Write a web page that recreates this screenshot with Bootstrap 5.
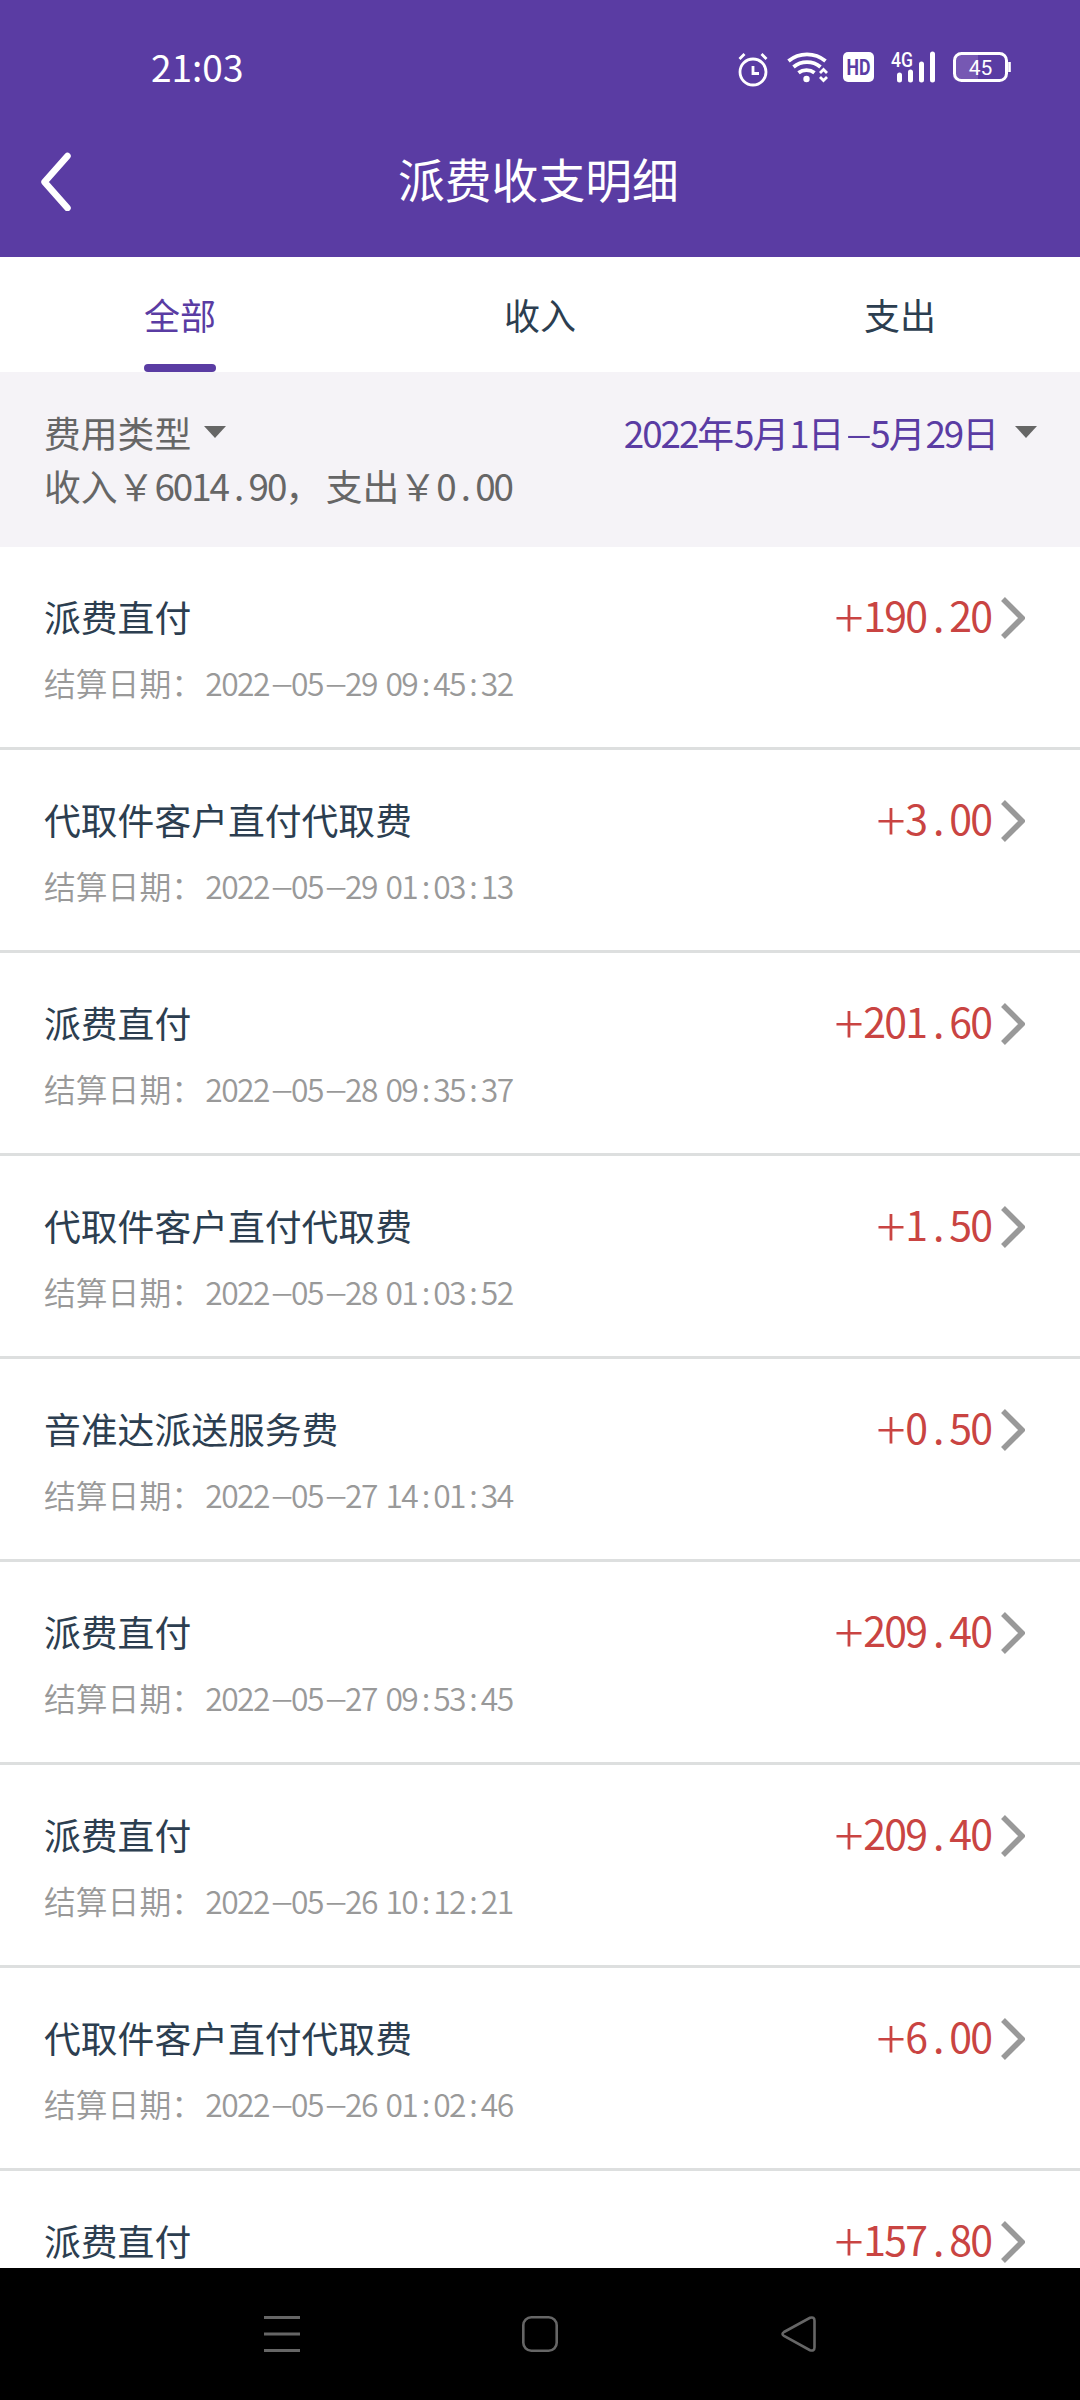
<!DOCTYPE html>
<html lang="zh-CN">
<head>
<meta charset="utf-8">
<meta name="viewport" content="width=device-width, initial-scale=1">
<title>派费收支明细</title>
<link href="https://cdn.jsdelivr.net/npm/bootstrap@5.3.0/dist/css/bootstrap.min.css" rel="stylesheet">
<style>
:root { --brand: #5a3ca3; --ink: #2c3e50; }
body { width: 1080px; height: 2400px; overflow: hidden; font-family: "Noto Sans CJK SC", sans-serif; font-weight: 400; font-kerning: none; color: var(--ink); line-height: 1; background: #fff; }
svg { display: block; flex: none; }
.app-head { background: var(--brand); height: 257px; }
.status-row { height: 136px; padding: 0 68px 0 151px; }
.status-row svg { margin-top: 2px; }
.clock { font-size: 37px; line-height: 50px; padding-bottom: 5px; }
.title-row { height: 90px; padding-left: 40px; }
.page-title { font-size: 46.8px; line-height: 60px; font-weight: 400; width: 281px; margin-left: 326px; padding-bottom: 6px; }
.tab-row { height: 115px; }
.tab-row .nav-link { height: 115px; width: 72px; padding: 32px 0 0; font-size: 36px; line-height: 50px; color: var(--ink); }
.tab-row .nav-link.active { color: var(--brand); }
.tab-row .nav-link.active::after { content: ""; display: block; height: 8px; margin-top: 25px; border-radius: 4px; background: var(--brand); }
.filter-bar { height: 175px; background: #f5f3f7; color: #666; font-size: 36.8px; padding: 34px 43px 0 44px; }
.filter-bar .line-box { height: 53px; line-height: 53px; }
.range-text { color: var(--brand); }
.range-text b { position: static; }
.caret { width: 22px; height: 12px; margin: 0 0 2px 16px; }
.type-pick .caret { margin-left: 13px; }
.bill-item { height: 203px; border-bottom: 3px solid #dddfdf; padding: 41px 55px 0 44px; }
.bill-item:last-child { height: 97px; border-bottom: 0; }
.bill-name { font-size: 36.8px; line-height: 56px; }
.bill-date { font-size: 31.8px; line-height: 44px; margin-top: 16px; color: #999; font-weight: 350; }
.bill-sum { font-size: 41px; line-height: 53px; color: #c94442; height: 56px; }
.bill-sum .fig { margin-right: 1px; }
.chev { margin-top: 2px; margin-left: -1px; }
.fig b { font-weight: inherit; display: inline-block; text-align: center; width: .5em; letter-spacing: -.052em; }
.bill-sum .fig b { width: .512em; }
.fig .g-dot, .bill-sum .fig .g-dot { width: .56em; }
.fig .g-dash { width: .7em; transform: scale(2.3, .8); }
.bill-sum .fig .g-plus { width: .76em; font-weight: 300; transform: scale(1.32); }
.fig .g-gap { width: .27em; }
.fig .g-comma { width: 1.1em; text-align: left; }
.fig .g-colon { width: 1.07em; text-align: left; }
.nav-keys { height: 132px; padding: 0 262px; background: #000; }
</style>
</head>
<body>
<header class="app-head text-white">
  <div class="status-row d-flex align-items-center justify-content-between">
    <span class="clock">21:03</span>
    <svg width="276" height="40" viewBox="0 0 276 40" fill="none" stroke="#fff">
      <circle cx="17" cy="23" r="13" stroke-width="2.800"/>
      <path d="M17 17v7.500h6M3.500 10l5-5M30.500 10l-5-5" stroke-width="2.800"/>
      <path d="M52.500 12a29 29 0 0 1 37 0M57.500 18a21 21 0 0 1 27 0M62.500 23.800a13 13 0 0 1 16 0" stroke-width="3.800"/>
      <circle cx="70.500" cy="30" r="3.200" fill="#fff" stroke="none"/>
      <path d="M84 24l3.500-3.500L91 24M84 28l3.500 3.500L91 28" stroke-width="2.800"/>
      <rect x="107" y="3" width="31" height="30" rx="5" fill="#fff" stroke="none"/>
      <text x="122.500" y="26" font-family="Roboto, sans-serif" font-weight="700" font-size="22" textLength="24" lengthAdjust="spacingAndGlyphs" text-anchor="middle" fill="#5a3ca3" stroke="none">HD</text>
      <text x="155" y="18" font-family="Roboto, sans-serif" font-weight="500" font-size="20" textLength="22" lengthAdjust="spacingAndGlyphs" fill="#fff" stroke="none">4G</text>
      <path d="M163.500 26v5M174.500 23v8M185.500 15v16M196.500 5v26" stroke-width="5" stroke-linecap="round"/>
      <path d="M222 5h20v27h-20a5 5 0 0 1-5-5v-17a5 5 0 0 1 5-5z" fill="#7658b3" stroke="none"/>
      <rect x="218.500" y="4.500" width="52" height="27" rx="7" stroke-width="3"/>
      <path d="M273.500 13v10" stroke-width="2.600"/>
      <text x="244.500" y="25.500" font-family="Roboto, sans-serif" font-size="21" text-anchor="middle" fill="#fff" stroke="none">45</text>
    </svg>
  </div>
  <div class="title-row d-flex align-items-center">
    <svg width="32" height="60" viewBox="0 0 32 60" fill="none" stroke="#fff" stroke-width="6.500" stroke-linecap="round" stroke-linejoin="round"><path d="M27.500 5L4.500 31l23 26"/></svg>
    <h1 class="page-title mb-0 text-nowrap">派费收支明细</h1>
  </div>
</header>

<nav class="tab-row d-flex bg-white">
  <div class="col-4 d-flex justify-content-center"><a class="nav-link active" href="#">全部</a></div>
  <div class="col-4 d-flex justify-content-center"><a class="nav-link" href="#">收入</a></div>
  <div class="col-4 d-flex justify-content-center"><a class="nav-link" href="#">支出</a></div>
</nav>

<section class="filter-bar">
  <div class="line-box d-flex justify-content-between align-items-center">
    <div class="type-pick d-flex align-items-center"><span>费用类型</span><svg class="caret" viewBox="0 0 22 12"><path d="M0 0h22L11 12z" fill="#666"/></svg></div>
    <div class="d-flex align-items-center"><span class="fig range-text">2022年5月1日-5月29日</span><svg class="caret" viewBox="0 0 22 12"><path d="M0 0h22L11 12z" fill="#666"/></svg></div>
  </div>
  <div class="line-box fig">收入￥6014.90，支出￥0.00</div>
</section>

<main class="bill-list">
  <div class="bill-item d-flex justify-content-between">
    <div><div class="bill-name">派费直付</div><div class="bill-date fig">结算日期：2022-05-29 09:45:32</div></div>
    <div class="bill-sum d-flex"><span class="fig">+190.20</span><svg class="chev" width="34" height="56" viewBox="0 0 34 56"><path d="M12 9l19 19-19 19" fill="none" stroke="#999" stroke-width="5.500"/></svg></div>
  </div>
  <div class="bill-item d-flex justify-content-between">
    <div><div class="bill-name">代取件客户直付代取费</div><div class="bill-date fig">结算日期：2022-05-29 01:03:13</div></div>
    <div class="bill-sum d-flex"><span class="fig">+3.00</span><svg class="chev" width="34" height="56" viewBox="0 0 34 56"><path d="M12 9l19 19-19 19" fill="none" stroke="#999" stroke-width="5.500"/></svg></div>
  </div>
  <div class="bill-item d-flex justify-content-between">
    <div><div class="bill-name">派费直付</div><div class="bill-date fig">结算日期：2022-05-28 09:35:37</div></div>
    <div class="bill-sum d-flex"><span class="fig">+201.60</span><svg class="chev" width="34" height="56" viewBox="0 0 34 56"><path d="M12 9l19 19-19 19" fill="none" stroke="#999" stroke-width="5.500"/></svg></div>
  </div>
  <div class="bill-item d-flex justify-content-between">
    <div><div class="bill-name">代取件客户直付代取费</div><div class="bill-date fig">结算日期：2022-05-28 01:03:52</div></div>
    <div class="bill-sum d-flex"><span class="fig">+1.50</span><svg class="chev" width="34" height="56" viewBox="0 0 34 56"><path d="M12 9l19 19-19 19" fill="none" stroke="#999" stroke-width="5.500"/></svg></div>
  </div>
  <div class="bill-item d-flex justify-content-between">
    <div><div class="bill-name">音准达派送服务费</div><div class="bill-date fig">结算日期：2022-05-27 14:01:34</div></div>
    <div class="bill-sum d-flex"><span class="fig">+0.50</span><svg class="chev" width="34" height="56" viewBox="0 0 34 56"><path d="M12 9l19 19-19 19" fill="none" stroke="#999" stroke-width="5.500"/></svg></div>
  </div>
  <div class="bill-item d-flex justify-content-between">
    <div><div class="bill-name">派费直付</div><div class="bill-date fig">结算日期：2022-05-27 09:53:45</div></div>
    <div class="bill-sum d-flex"><span class="fig">+209.40</span><svg class="chev" width="34" height="56" viewBox="0 0 34 56"><path d="M12 9l19 19-19 19" fill="none" stroke="#999" stroke-width="5.500"/></svg></div>
  </div>
  <div class="bill-item d-flex justify-content-between">
    <div><div class="bill-name">派费直付</div><div class="bill-date fig">结算日期：2022-05-26 10:12:21</div></div>
    <div class="bill-sum d-flex"><span class="fig">+209.40</span><svg class="chev" width="34" height="56" viewBox="0 0 34 56"><path d="M12 9l19 19-19 19" fill="none" stroke="#999" stroke-width="5.500"/></svg></div>
  </div>
  <div class="bill-item d-flex justify-content-between">
    <div><div class="bill-name">代取件客户直付代取费</div><div class="bill-date fig">结算日期：2022-05-26 01:02:46</div></div>
    <div class="bill-sum d-flex"><span class="fig">+6.00</span><svg class="chev" width="34" height="56" viewBox="0 0 34 56"><path d="M12 9l19 19-19 19" fill="none" stroke="#999" stroke-width="5.500"/></svg></div>
  </div>
  <div class="bill-item d-flex justify-content-between">
    <div><div class="bill-name">派费直付</div></div>
    <div class="bill-sum d-flex"><span class="fig">+157.80</span><svg class="chev" width="34" height="56" viewBox="0 0 34 56"><path d="M12 9l19 19-19 19" fill="none" stroke="#999" stroke-width="5.500"/></svg></div>
  </div>
</main>

<footer class="nav-keys d-flex align-items-center justify-content-between">
  <svg width="38" height="38" viewBox="0 0 38 38" stroke="#666" stroke-width="3"><path d="M2 2.500h36M2 19h36M2 35.500h36"/></svg>
  <svg width="38" height="38" viewBox="0 0 38 38" fill="none" stroke="#666" stroke-width="2.600"><rect x="2.300" y="2.300" width="33.400" height="33.400" rx="8"/></svg>
  <svg width="38" height="38" viewBox="0 0 38 38" fill="none" stroke="#666" stroke-width="2.600"><path d="M4 17L30 2.800q4.500-1.500 4.500 3v26.400q0 4.500-4.500 3L4 21q-3-2 0-4z"/></svg>
</footer>

<script src="https://cdn.jsdelivr.net/npm/bootstrap@5.3.0/dist/js/bootstrap.bundle.min.js"></script>
<script>
// Give figures fixed-width cells so that digits and separators line up between rows
document.querySelectorAll('.fig').forEach(function (el) {
  var cls = { '-': 'g-dash', '+': 'g-plus', ' ': 'g-gap', '.': 'g-dot', '，': 'g-comma', '：': 'g-colon' };
  el.innerHTML = el.textContent.replace(/[-+ .:，：0-9]/g, function (c) {
    return '<b class="' + (cls[c] || 'g-num') + '">' + (c === ' ' ? '&nbsp;' : c) + '</b>';
  });
});
</script>
</body>
</html>
